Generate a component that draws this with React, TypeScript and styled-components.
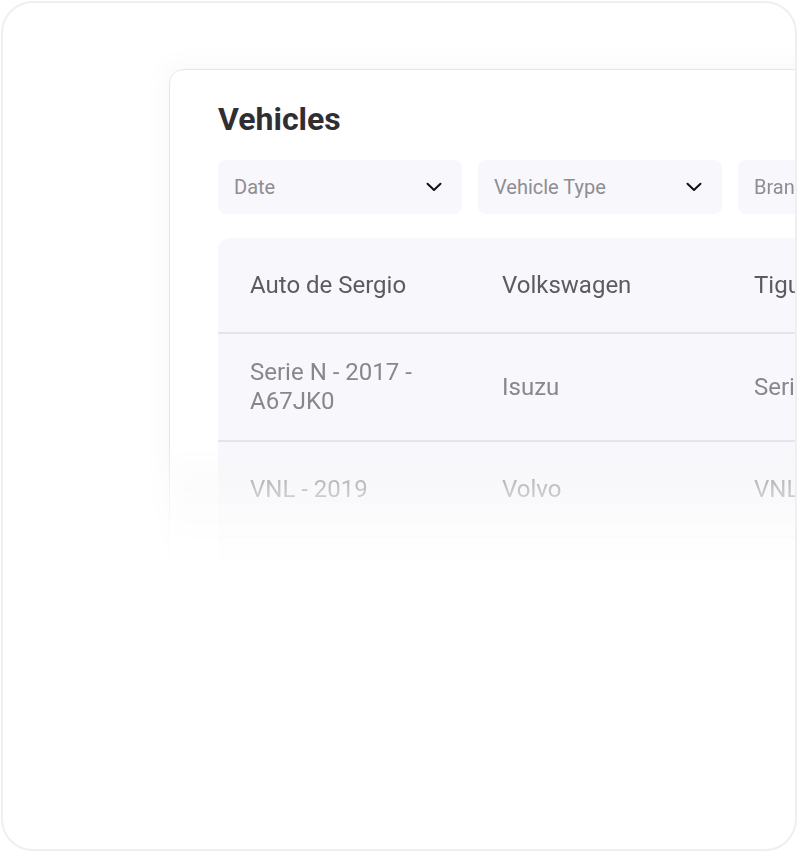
import React from 'react'
import styled, { createGlobalStyle } from 'styled-components'

const GlobalStyle = createGlobalStyle`
  * { box-sizing: border-box; }
  html, body { margin: 0; padding: 0; background: #ffffff; }
  body { font-family: Roboto, "Noto Sans", "Liberation Sans", sans-serif; }
`

type Vehicle = {
  name: string
  brand: string
  model: string
  type: string
}

const vehicles: Vehicle[] = [
  { name: 'Auto de Sergio', brand: 'Volkswagen', model: 'Tiguan', type: 'SUV' },
  { name: 'Serie N - 2017 - A67JK0', brand: 'Isuzu', model: 'Serie N', type: 'Truck' },
  { name: 'VNL - 2019', brand: 'Volvo', model: 'VNL', type: 'Truck' },
]

const filters = ['Date', 'Vehicle Type', 'Brand']

const Chevron = () => (
  <svg width="16" height="10" viewBox="0 0 16 10" fill="none">
    <path d="M1.5 1.8 L8 8 L14.5 1.8" stroke="#111" strokeWidth="2" strokeLinecap="round" strokeLinejoin="round" />
  </svg>
)

const App = () => {
  return (
    <>
      <GlobalStyle />
      <Frame>
        <CardShadow>
          <Card>
            <Title>Vehicles</Title>
            <FilterBar>
              {filters.map((f) => (
                <Filter key={f}>
                  <span>{f}</span>
                  <Chevron />
                </Filter>
              ))}
            </FilterBar>
            <Table>
              {vehicles.map((v, i) => (
                <Row key={i}>
                  <Cell first={i === 0}>{v.name}</Cell>
                  <Cell first={i === 0}>{v.brand}</Cell>
                  <Cell first={i === 0}>{v.model}</Cell>
                  <Cell first={i === 0}>{v.type}</Cell>
                </Row>
              ))}
            </Table>
          </Card>
        </CardShadow>
      </Frame>
    </>
  )
}

export default App

const Frame = styled.div`
  margin: 1px 0 0 1px;
  width: 796px;
  height: 850px;
  border: 2px solid #efeff0;
  border-radius: 32px;
  background: #ffffff;
  overflow: hidden;
  padding: 66px 0 0 166px;
`

const CardShadow = styled.div`
  width: 760px;
  filter: drop-shadow(0 0 12px rgba(30, 30, 60, 0.05));
`

const Card = styled.div`
  width: 760px;
  background: #ffffff;
  border: 1.5px solid #e6e6e9;
  border-radius: 14px;
  padding: 30px 0 60px 48px;
  -webkit-mask-image: linear-gradient(
    to bottom,
    #000 0,
    #000 375px,
    rgba(0, 0, 0, 0.45) 421px,
    rgba(0, 0, 0, 0.1) 468px,
    transparent 530px
  );
  mask-image: linear-gradient(
    to bottom,
    #000 0,
    #000 375px,
    rgba(0, 0, 0, 0.45) 421px,
    rgba(0, 0, 0, 0.1) 468px,
    transparent 530px
  );
`

const Title = styled.h1`
  margin: 0;
  font-size: 32px;
  line-height: 38px;
  font-weight: 700;
  color: #2f2f33;
`

const FilterBar = styled.div`
  display: flex;
  gap: 16px;
  margin-top: 22px;
`

const Filter = styled.div`
  flex: 0 0 244px;
  height: 54px;
  display: flex;
  align-items: center;
  justify-content: space-between;
  padding: 0 20px 0 16px;
  background: #f8f7fb;
  border-radius: 8px;
  font-size: 20px;
  color: #8e8d93;
`

const Table = styled.div`
  margin-top: 24px;
  background: #f8f7fb;
  border-radius: 12px 0 0 0;
  padding-bottom: 60px;
`

const Row = styled.div`
  display: grid;
  grid-template-columns: repeat(4, 252px);
  min-height: 96px;
  padding: 24px 0;
  align-items: center;
  border-bottom: 2px solid #e5e4e9;
`

const Cell = styled.div<{ first?: boolean }>`
  padding: 0 32px;
  font-size: 24px;
  line-height: 29px;
  color: ${(p) => (p.first ? '#5c5b61' : '#88878d')};
`
